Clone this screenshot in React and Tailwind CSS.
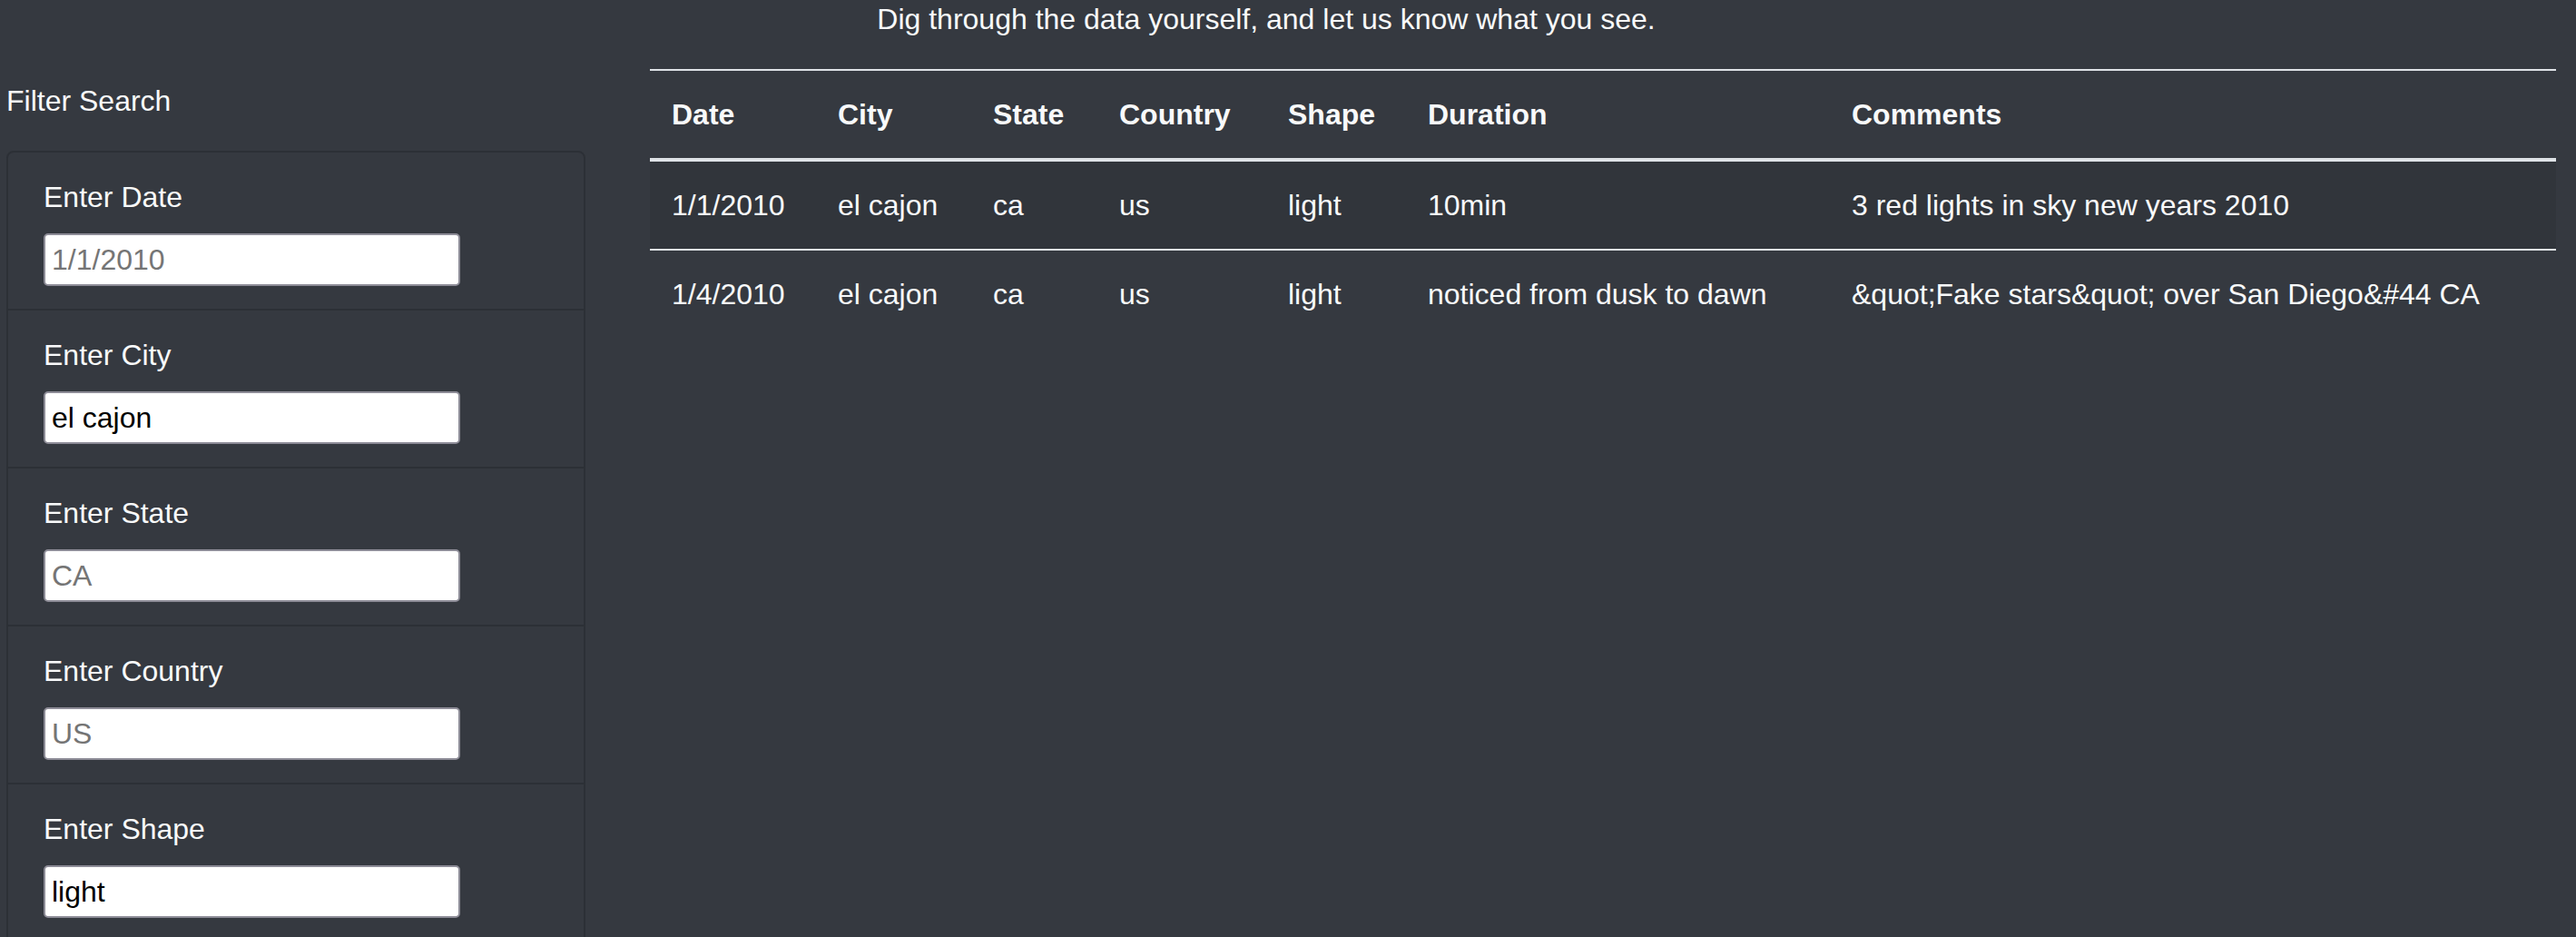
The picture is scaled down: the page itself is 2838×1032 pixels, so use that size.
import React from 'react'

const filters = [
  { id: 'datetime', label: 'Enter Date', placeholder: '1/1/2010', value: '' },
  { id: 'city', label: 'Enter City', placeholder: 'el cajon', value: 'el cajon' },
  { id: 'state', label: 'Enter State', placeholder: 'CA', value: '' },
  { id: 'country', label: 'Enter Country', placeholder: 'US', value: '' },
  { id: 'shape', label: 'Enter Shape', placeholder: 'circle', value: 'light' },
]

const sightings = [
  {
    date: '1/1/2010',
    city: 'el cajon',
    state: 'ca',
    country: 'us',
    shape: 'light',
    duration: '10min',
    comments: '3 red lights in sky new years 2010',
  },
  {
    date: '1/4/2010',
    city: 'el cajon',
    state: 'ca',
    country: 'us',
    shape: 'light',
    duration: 'noticed from dusk to dawn',
    comments: '&quot;Fake stars&quot; over San Diego&#44 CA',
  },
]

const columns = [
  { key: 'date', label: 'Date', width: 'w-[183px]' },
  { key: 'city', label: 'City', width: 'w-[171px]' },
  { key: 'state', label: 'State', width: 'w-[139px]' },
  { key: 'country', label: 'Country', width: 'w-[186px]' },
  { key: 'shape', label: 'Shape', width: 'w-[154px]' },
  { key: 'duration', label: 'Duration', width: 'w-[467px]' },
  { key: 'comments', label: 'Comments', width: 'w-[800px]' },
]

function FilterPanel() {
  return (
    <aside className="ml-[7px] w-[638px] shrink-0">
      <h5 className="mt-[42px] text-[32px] leading-[48px]">Filter Search</h5>
      <ul className="mt-[31px] rounded-[8px] border-2 border-[#2c3036]">
        {filters.map((f) => (
          <li key={f.id} className="border-b-2 border-[#2c3036] px-[39px] py-[25px]">
            <label htmlFor={f.id} className="mb-4 block text-[32px] leading-[48px]">
              {f.label}
            </label>
            <input
              id={f.id}
              type="text"
              placeholder={f.placeholder}
              defaultValue={f.value}
              className="block h-[58px] w-[459px] rounded-[5px] border-2 border-[#8d8c97] bg-white px-[7px] text-[32px] text-black placeholder:text-[#757575] outline-none"
            />
          </li>
        ))}
      </ul>
    </aside>
  )
}

export default function App() {
  return (
    <div className="min-h-[1032px] bg-[#353940] text-[#f8f9fa] font-['Liberation_Sans',Arial,sans-serif]">
      <p className="-mt-[3px] pr-[48px] text-center text-[32px] leading-[48px]">
        Dig through the data yourself, and let us know what you see.
      </p>
      <div className="flex">
        <FilterPanel />
        <div className="ml-[71px] mt-[31px] w-[2100px]">
          <table className="w-full table-fixed border-collapse text-[32px] leading-[48px]">
            <colgroup>
              {columns.map((c) => (
                <col key={c.key} className={c.width} />
              ))}
            </colgroup>
            <thead>
              <tr>
                {columns.map((c) => (
                  <th
                    key={c.key}
                    className="border-t-2 border-b-4 border-[#dee2e6] px-6 py-6 text-left font-bold"
                  >
                    {c.label}
                  </th>
                ))}
              </tr>
            </thead>
            <tbody>
              {sightings.map((s, i) => (
                <tr key={i} className={i % 2 === 0 ? 'bg-[#31353b]' : ''}>
                  {columns.map((c) => (
                    <td
                      key={c.key}
                      className={`px-6 py-6 whitespace-nowrap ${i > 0 ? 'border-t-2 border-[#dee2e6]' : ''}`}
                    >
                      {s[c.key]}
                    </td>
                  ))}
                </tr>
              ))}
            </tbody>
          </table>
        </div>
      </div>
    </div>
  )
}
